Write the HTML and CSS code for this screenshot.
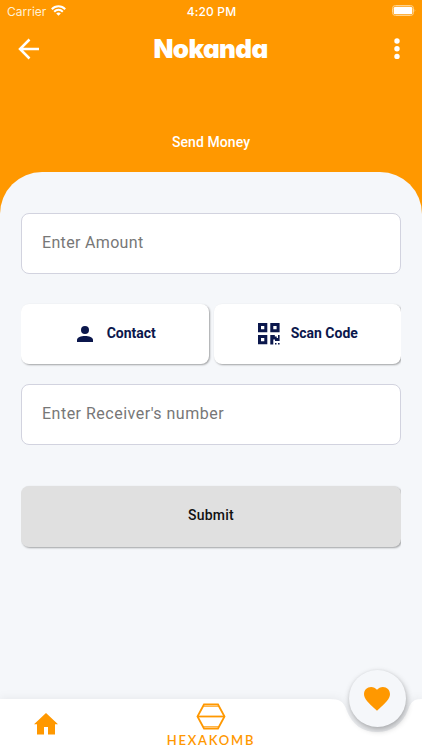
FILE: index.html
```html
<!DOCTYPE html>
<html lang="en">
<head>
  <meta charset="UTF-8">
  <title>Nokanda - Send Money</title>
  <link rel="stylesheet" href="styles.css">
</head>
<body>
  <div class="app">
    <div class="status-bar">
      <div class="carrier">
        <span>Carrier</span>
        <svg class="wifi" viewBox="0 0 15 11">
          <path d="M.8 4.200C4.500 .3 10.500 .3 14.200 4.200" />
          <path d="M3.200 6.700C5.700 4.200 9.300 4.200 11.800 6.700" />
          <path class="dot" d="M5.200 8.400C6.500 7.200 8.500 7.200 9.800 8.400L7.500 10.800Z" />
        </svg>
      </div>
      <span class="time">4:20 PM</span>
      <svg class="battery" viewBox="0 0 24 12">
        <rect class="case" x=".5" y=".5" width="21" height="10" rx="3" />
        <rect class="level" x="1.700" y="1.700" width="18.600" height="7.600" rx="1.600" />
        <path class="tip" d="M22.700 4Q24 5.500 22.700 7Z" />
      </svg>
    </div>

    <header class="top-bar">
      <svg class="back" viewBox="0 0 22 22"><path d="M21 11H2M11.500 1.500L2 11L11.500 20.500" /></svg>
      <h1>Nokanda</h1>
      <svg class="more" viewBox="0 0 6 22"><circle cx="3" cy="3" r="2.700" /><circle cx="3" cy="10.700" r="2.700" /><circle cx="3" cy="18.400" r="2.700" /></svg>
    </header>

    <h2>Send Money</h2>

    <main class="sheet">
      <input class="amount" type="text" placeholder="Enter Amount">
      <div class="options">
        <button class="option contact">
          <svg class="person" viewBox="0 0 16 16"><circle cx="8" cy="4" r="4" /><path d="M0 16V14C0 8.700 16 8.700 16 14V16Z" /></svg>
          <span>Contact</span>
        </button>
        <button class="option scan">
          <svg class="qr" viewBox="0 0 22 22">
            <path fill-rule="evenodd" d="M0 0H9.300V9.300H0ZM3 3V6.300H6.300V3ZM12.300 0H21.600V9.300H12.300ZM15.300 3V6.300H18.600V3ZM0 12H9.300V21.300H0ZM3 15V18.300H6.300V15Z" />
            <path d="M12.300 12H16.800V13.500H18.700V15H20V12H21.600V18H17V16.500H15.300V21.600H12.300ZM17 20H18.500V21.600H17ZM20 20H21.600V21.600H20Z" />
          </svg>
          <span>Scan Code</span>
        </button>
      </div>
      <input class="receiver" type="text" placeholder="Enter Receiver's number">
      <button class="submit">Submit</button>
    </main>

    <footer>
      <svg class="bar" viewBox="0 0 422 70">
        <path d="M0 19H329C340 19 344 22 346.500 30C352 45 363 52 377 52C391 52 402 45 408 30C410.500 22 414 19 422 19V70H0Z" />
      </svg>
      <svg class="home" viewBox="0 0 24 22"><path d="M12 0L24 11.200H21V21.500H14V14H10V21.500H3V11.200H0Z" /></svg>
      <div class="brand">
        <svg class="hexagon" viewBox="0 0 30 27">
          <path d="M8 1.500H22L28.500 13.500L22 25.500H8L1.500 13.500Z" />
          <path d="M1.500 13.500H28.500" />
          <path class="inner" d="M7.500 3.400H22.500M7.500 23.600H22.500" />
        </svg>
        <span>HEXAKOMB</span>
      </div>
      <button class="favorite">
        <svg viewBox="0 0 26 24"><path d="M13 23.700L11.100 22C4.400 15.900 0 11.900 0 7.100C0 3.100 3.100 0 7.100 0C9.400 0 11.600 1.100 13 2.800C14.400 1.100 16.600 0 18.900 0C22.900 0 26 3.100 26 7.100C26 11.900 21.600 15.900 14.900 22Z" /></svg>
      </button>
    </footer>
  </div>
</body>
</html>
```
FILE: styles.css
```css
* {
  margin: 0;
  padding: 0;
  box-sizing: border-box;
}

body {
  font-family: Roboto, sans-serif;
  background: #ff9800;
  color: white;
  overflow: hidden;
}

svg {
  display: block;
  flex: none;
}

button {
  border: none;
  font-family: inherit;
}

.app {
  width: 422px;
  height: 750px;
  display: flex;
  flex-direction: column;
}

.status-bar {
  display: grid;
  grid-template-columns: 1fr auto 1fr;
  align-items: center;
  height: 22px;
  padding: 0 6px 0 7px;
  font-family: Inter, sans-serif;
  font-size: 12px;
}

.carrier {
  display: flex;
  align-items: center;
  gap: 5px;
  color: #fff0d5;
}

.wifi {
  width: 15px;
  height: 11px;
  margin-top: -2px;
  fill: none;
  stroke: white;
  stroke-width: 2;
}

.wifi .dot {
  fill: white;
  stroke: none;
}

.time {
  font-weight: 500;
  letter-spacing: .15px;
}

.battery {
  width: 24px;
  height: 12px;
  justify-self: end;
  fill: white;
}

.battery .case {
  fill: none;
  stroke: #ffd38c;
}

.battery .tip {
  fill: #ffd38c;
}

.top-bar {
  display: flex;
  align-items: center;
  justify-content: space-between;
  height: 54px;
  padding: 0 22px 0 18px;
}

.back {
  width: 22px;
  height: 22px;
  fill: none;
  stroke: white;
  stroke-width: 2.5;
}

.more {
  width: 6px;
  height: 22px;
  fill: white;
}

h1 {
  font-family: Inter, sans-serif;
  font-size: 26px;
  font-weight: 900;
  font-feature-settings: "cv11";
  letter-spacing: -.65px;
  margin: -2px 0 0 -13px;
}

h2 {
  height: 96px;
  padding-top: 56px;
  text-align: center;
  font-size: 14px;
  line-height: 20px;
  font-weight: 500;
  letter-spacing: .08px;
}

.sheet {
  flex: 1;
  display: flex;
  flex-direction: column;
  padding: 41px 21px 0;
  background: #f5f7fa;
  border-radius: 42px 42px 0 0;
}

input {
  height: 61px;
  padding: 0 20px 2px;
  border: 1px solid #d2d3df;
  border-radius: 8px;
  background: white;
  font-family: Roboto, sans-serif;
  font-size: 16px;
}

input::placeholder {
  color: #777;
}

.amount {
  letter-spacing: .33px;
}

.receiver {
  letter-spacing: .49px;
}

.options {
  display: grid;
  grid-template-columns: 1fr 1fr;
  gap: 5px;
  margin: 30px 0 20px;
  clip-path: inset(-4px 0);
}

.option {
  display: flex;
  align-items: center;
  justify-content: center;
  height: 60px;
  border-radius: 8px;
  background: white;
  box-shadow: 1px 1px 2px rgba(0, 0, 0, .35);
  color: #0b174c;
  fill: #0b174c;
  font-size: 14px;
  font-weight: 700;
}

.option span {
  margin-top: -2px;
}

.contact {
  padding-left: 3px;
}

.scan {
  padding-left: 1px;
}

.person {
  width: 16px;
  height: 16px;
  margin-right: 14px;
}

.qr {
  width: 22px;
  height: 22px;
  margin-right: 11px;
}

.submit {
  height: 61px;
  margin-top: 41px;
  padding-bottom: 3px;
  border-radius: 8px;
  background: #e0e0e0;
  box-shadow: 1px 1px 2px rgba(0, 0, 0, .35);
  clip-path: inset(-4px 0);
  font-size: 14px;
  font-weight: 500;
  letter-spacing: .2px;
  color: #111;
}

footer {
  position: relative;
  height: 70px;
  background: #f5f7fa;
  display: flex;
  justify-content: center;
  color: #ff9800;
}

.bar {
  position: absolute;
  width: 422px;
  height: 70px;
  fill: white;
  filter: drop-shadow(0 -1px 4px rgba(0, 0, 0, .06));
}

.home {
  position: absolute;
  left: 34px;
  top: 33px;
  width: 24px;
  height: 22px;
  fill: #ff9800;
}

.brand {
  position: relative;
  display: flex;
  flex-direction: column;
  align-items: center;
  padding-top: 23px;
}

.hexagon {
  width: 30px;
  height: 27px;
  fill: none;
  stroke: #ff9800;
  stroke-width: 1.8;
}

.hexagon .inner {
  stroke-width: .8;
}

.brand span {
  margin-top: 2px;
  font: 600 13px/16px Lato, sans-serif;
  letter-spacing: 1.8px;
}

.favorite {
  position: absolute;
  left: 349px;
  top: -10px;
  width: 57px;
  height: 57px;
  display: flex;
  align-items: center;
  justify-content: center;
  border-radius: 50%;
  background: #f5f7fa;
  box-shadow: 1px 3px 6px rgba(0, 0, 0, .3), 0 0 3px rgba(0, 0, 0, .06);
}

.favorite svg {
  width: 26px;
  height: 24px;
  margin-left: -1px;
  fill: #ff9800;
}
```
